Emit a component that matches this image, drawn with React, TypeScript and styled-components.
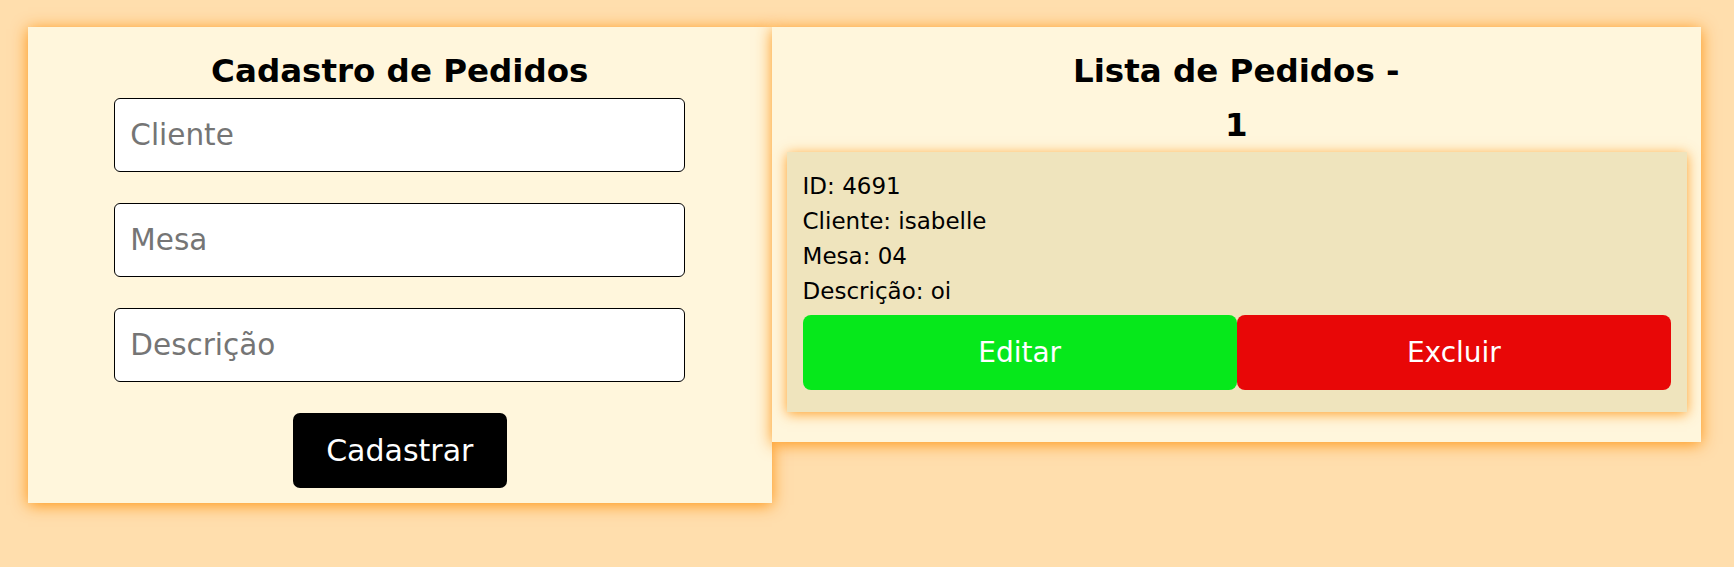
import styled, { createGlobalStyle } from 'styled-components'

interface Pedido {
  id: number
  cliente: string
  mesa: string
  descricao: string
}

const pedidos: Pedido[] = [{ id: 4691, cliente: 'isabelle', mesa: '04', descricao: 'oi' }]

export default function App() {
  return (
    <>
      <GlobalStyle />
      <Page>
        <Panel grow={4} pb={15}>
          <Title>Cadastro de Pedidos</Title>
          <Form onSubmit={(e) => e.preventDefault()}>
            <Input placeholder="Cliente" />
            <Input placeholder="Mesa" />
            <Input placeholder="Descrição" />
            <SubmitButton type="submit">Cadastrar</SubmitButton>
          </Form>
        </Panel>

        <Panel grow={5} pb={30}>
          <Title narrow>Lista de Pedidos - {pedidos.length}</Title>
          {pedidos.map((p) => (
            <Card key={p.id}>
              <InfoLine>ID: {p.id}</InfoLine>
              <InfoLine>Cliente: {p.cliente}</InfoLine>
              <InfoLine>Mesa: {p.mesa}</InfoLine>
              <InfoLine>Descrição: {p.descricao}</InfoLine>
              <Actions>
                <ActionButton variant="edit">Editar</ActionButton>
                <ActionButton variant="delete">Excluir</ActionButton>
              </Actions>
            </Card>
          ))}
        </Panel>
      </Page>
    </>
  )
}

// === Styling === //
const GlobalStyle = createGlobalStyle`
  * {
    box-sizing: border-box;
  }

  body {
    margin: 0;
    background: #ffdead;
    font-family: 'DejaVu Sans', 'Noto Sans', sans-serif;
    color: #000;
  }
`

const Page = styled.div`
  display: flex;
  align-items: flex-start;
  padding: 27px 33px 0 28px;
  min-height: 567px;
`

const Panel = styled.section<{ grow: number; pb: number }>`
  flex: ${({ grow }) => grow} 1 0;
  background: #fff6dc;
  box-shadow: 0 2px 15px rgba(255, 140, 0, 0.9);
  padding: 17px 0 ${({ pb }) => pb}px;
  display: flex;
  flex-direction: column;
  align-items: center;
`

const Title = styled.h1<{ narrow?: boolean }>`
  margin: 0;
  font-size: 32.5px;
  line-height: 54px;
  font-weight: 700;
  text-align: center;
  max-width: ${({ narrow }) => (narrow ? '340px' : 'none')};
`

const Form = styled.form`
  display: flex;
  flex-direction: column;
  align-items: center;
  gap: 31px;
  width: 100%;
`

const Input = styled.input`
  width: 571px;
  height: 74px;
  border: 1px solid #000;
  border-radius: 6px;
  background: #fff;
  padding: 0 15px;
  font-family: inherit;
  font-size: 29.5px;
  color: #000;

  &::placeholder {
    color: #757575;
  }
`

const SubmitButton = styled.button`
  width: 214px;
  height: 75px;
  border: none;
  border-radius: 7px;
  background: #000;
  color: #fff;
  font-family: inherit;
  font-size: 30px;
  cursor: pointer;
`

const Card = styled.article`
  align-self: stretch;
  margin: 0 14px 0 15px;
  background: #efe4bd;
  box-shadow: 0 2px 12px rgba(255, 140, 0, 0.8);
  padding: 17px 16px 22px;
`

const InfoLine = styled.p`
  margin: 0;
  font-size: 23px;
  line-height: 35px;
`

const Actions = styled.div`
  display: flex;
  margin-top: 6px;
`

const ActionButton = styled.button<{ variant: 'edit' | 'delete' }>`
  flex: 1;
  height: 75px;
  border: none;
  border-radius: 8px;
  background: ${({ variant }) => (variant === 'edit' ? '#06e81b' : '#e80707')};
  color: #fff;
  font-family: inherit;
  font-size: 28px;
  cursor: pointer;
`
